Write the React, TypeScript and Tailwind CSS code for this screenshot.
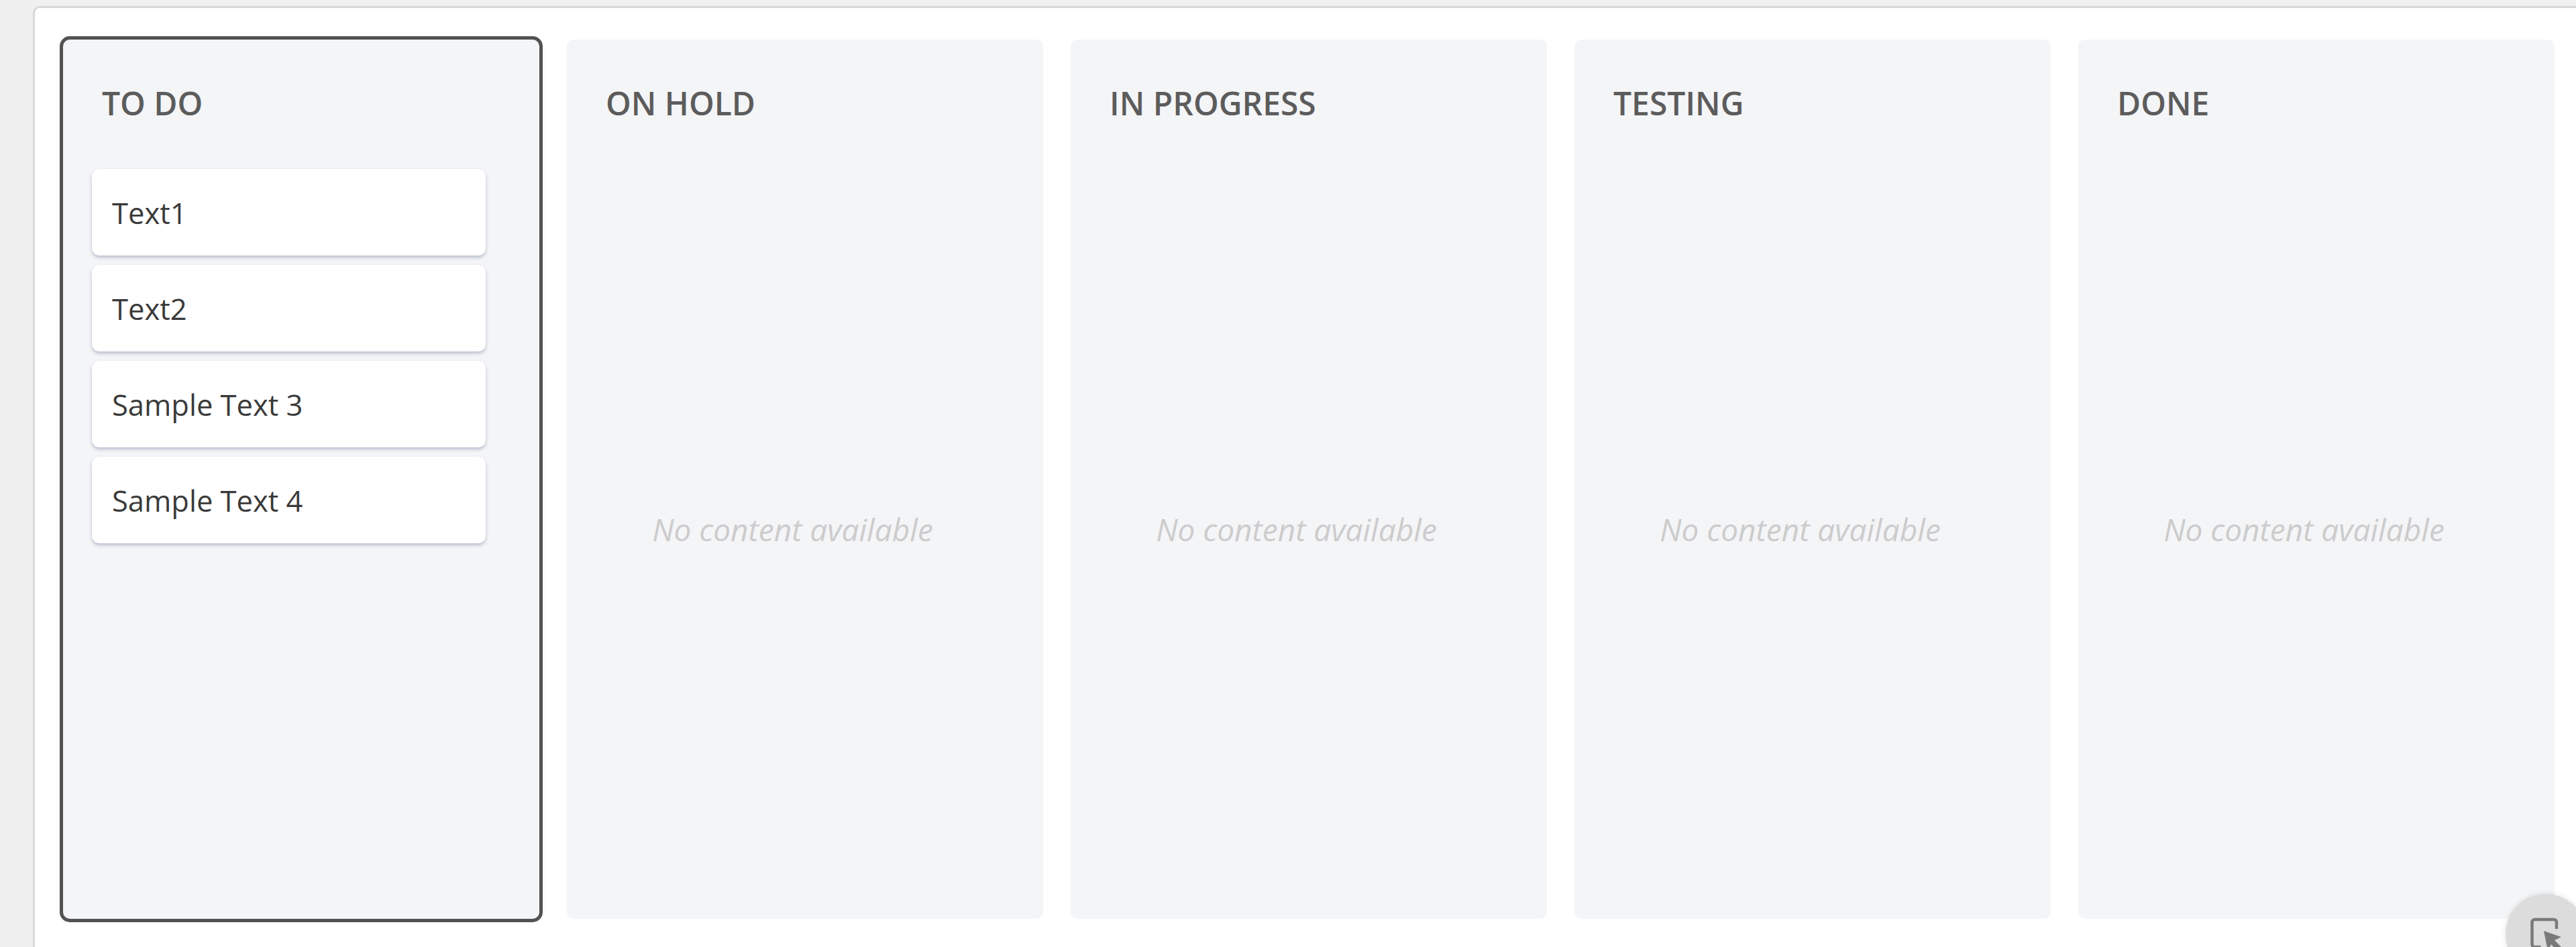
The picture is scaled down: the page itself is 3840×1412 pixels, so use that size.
const columns = ["TO DO", "ON HOLD", "IN PROGRESS", "TESTING", "DONE"];
const cards = ["Text1", "Text2", "Sample Text 3", "Sample Text 4"];

function Card({ text }: { text: string }) {
  return (
    <div className="flex h-[129px] items-center rounded-[11px] bg-white px-[30px] pt-[3px] text-[43.5px] text-[#3a3a3a] shadow-[0_3px_5px_rgba(110,125,160,0.45)]">
      {text}
    </div>
  );
}

function Column({ title, index }: { title: string; index: number }) {
  const active = index === 0;
  return (
    <div
      className={`flex h-[1311px] w-[710px] shrink-0 flex-col rounded-[10px] bg-[#f4f5f7] pl-[43px] pr-[80px] ${
        active ? "outline-[5px] outline-[#525252] shadow-[0_0_12px_rgba(0,0,0,0.15)]" : ""
      }`}
    >
      <h2 className="mt-[62px] h-[131px] pl-[15px] text-[48px] leading-[66px] font-[550] text-[#5c5c5c]">{title}</h2>
      {active ? (
        <div className="flex flex-col gap-[14px]">
          {cards.map((c) => (
            <Card key={c} text={c} />
          ))}
        </div>
      ) : (
        <div className="flex flex-1 items-center justify-center pb-[43px] text-[46px] text-[#cccccc] italic">
          No content available
        </div>
      )}
    </div>
  );
}

export default function App() {
  return (
    <div className="relative h-[1412px] w-[3840px] overflow-hidden bg-[#f0f0f0] pt-[9px] pl-[49px] font-['Open_Sans',sans-serif]">
      <div className="flex h-[1500px] w-[3900px] gap-[41px] rounded-tl-[10px] border-[3px] border-[#d8d8d8] bg-white pt-[47px] pl-[42px]">
        {columns.map((title, i) => (
          <Column key={title} title={title} index={i} />
        ))}
      </div>
      <div className="absolute top-[1333px] left-[3735px] h-[120px] w-[120px] rounded-full bg-[#dcdcdc] shadow-[0_0_8px_rgba(0,0,0,0.12)]">
        <svg className="absolute top-[34px] left-[35px]" width="70" height="70" viewBox="0 0 70 70" fill="none">
          <path d="M41 18V8a4 4 0 0 0-4-4H8.5a4 4 0 0 0-4 4v33a4 4 0 0 0 4 4h9" stroke="#7a7a7a" strokeWidth="4.5" />
          <path d="M22 21L48 30L38 35L51 48L45 54L33 41L28 51z" fill="#7a7a7a" />
        </svg>
      </div>
    </div>
  );
}
